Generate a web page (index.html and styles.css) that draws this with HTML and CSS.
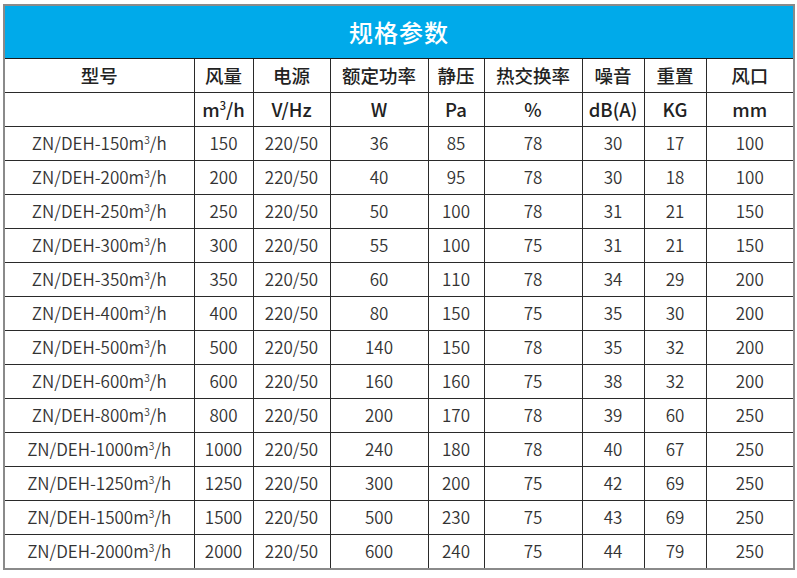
FILE: index.html
```html
<!DOCTYPE html>
<html lang="zh">
<head>
<meta charset="utf-8">
<title>规格参数</title>
<link rel="stylesheet" href="styles.css">
</head>
<body>
<div class="wrap">
<table class="spec">
<colgroup>
<col class="c1"><col class="c2"><col class="c3"><col class="c4"><col class="c5"><col class="c6"><col class="c7"><col class="c8"><col class="c9">
</colgroup>
<thead>
<tr class="title-row"><th colspan="9" class="title">规格参数</th></tr>
<tr class="head"><th>型号</th><th>风量</th><th>电源</th><th>额定功率</th><th>静压</th><th>热交换率</th><th>噪音</th><th>重置</th><th>风口</th></tr>
<tr class="head"><th></th><th>m<sup>3</sup>/h</th><th>V/Hz</th><th>W</th><th>Pa</th><th>%</th><th>dB(A)</th><th>KG</th><th>mm</th></tr>
</thead>
<tbody>
<tr><td>ZN/DEH-150m<sup>3</sup>/h</td><td>150</td><td>220/50</td><td>36</td><td>85</td><td>78</td><td>30</td><td>17</td><td>100</td></tr>
<tr><td>ZN/DEH-200m<sup>3</sup>/h</td><td>200</td><td>220/50</td><td>40</td><td>95</td><td>78</td><td>30</td><td>18</td><td>100</td></tr>
<tr><td>ZN/DEH-250m<sup>3</sup>/h</td><td>250</td><td>220/50</td><td>50</td><td>100</td><td>78</td><td>31</td><td>21</td><td>150</td></tr>
<tr><td>ZN/DEH-300m<sup>3</sup>/h</td><td>300</td><td>220/50</td><td>55</td><td>100</td><td>75</td><td>31</td><td>21</td><td>150</td></tr>
<tr><td>ZN/DEH-350m<sup>3</sup>/h</td><td>350</td><td>220/50</td><td>60</td><td>110</td><td>78</td><td>34</td><td>29</td><td>200</td></tr>
<tr><td>ZN/DEH-400m<sup>3</sup>/h</td><td>400</td><td>220/50</td><td>80</td><td>150</td><td>75</td><td>35</td><td>30</td><td>200</td></tr>
<tr><td>ZN/DEH-500m<sup>3</sup>/h</td><td>500</td><td>220/50</td><td>140</td><td>150</td><td>78</td><td>35</td><td>32</td><td>200</td></tr>
<tr><td>ZN/DEH-600m<sup>3</sup>/h</td><td>600</td><td>220/50</td><td>160</td><td>160</td><td>75</td><td>38</td><td>32</td><td>200</td></tr>
<tr><td>ZN/DEH-800m<sup>3</sup>/h</td><td>800</td><td>220/50</td><td>200</td><td>170</td><td>78</td><td>39</td><td>60</td><td>250</td></tr>
<tr><td>ZN/DEH-1000m<sup>3</sup>/h</td><td>1000</td><td>220/50</td><td>240</td><td>180</td><td>78</td><td>40</td><td>67</td><td>250</td></tr>
<tr><td>ZN/DEH-1250m<sup>3</sup>/h</td><td>1250</td><td>220/50</td><td>300</td><td>200</td><td>75</td><td>42</td><td>69</td><td>250</td></tr>
<tr><td>ZN/DEH-1500m<sup>3</sup>/h</td><td>1500</td><td>220/50</td><td>500</td><td>230</td><td>75</td><td>43</td><td>69</td><td>250</td></tr>
<tr><td>ZN/DEH-2000m<sup>3</sup>/h</td><td>2000</td><td>220/50</td><td>600</td><td>240</td><td>75</td><td>44</td><td>79</td><td>250</td></tr>
</tbody>
</table>
</div>
</body>
</html>
```
FILE: styles.css
```css
html, body {
  margin: 0;
  padding: 0;
  background: #ffffff;
}
.wrap {
  padding: 4px 0 0 3px;
}
.spec {
  border-collapse: collapse;
  table-layout: fixed;
  width: 790px;
  border: 2px solid #8a8a8a;
  font-family: "Noto Sans CJK SC", "Noto Sans", sans-serif;
}
.c1 { width: 190px; }
.c2 { width: 59px; }
.c3 { width: 77px; }
.c4 { width: 98px; }
.c5 { width: 56px; }
.c6 { width: 98px; }
.c7 { width: 62px; }
.c8 { width: 62px; }
.c9 { width: 88px; }
.spec th, .spec td {
  border: 1px solid #2a2a2a;
  text-align: center;
  padding: 0;
  white-space: nowrap;
  line-height: 1.2;
}
.title-row .title {
  background: #00aaea;
  color: #ffffff;
  height: 52px;
  font-size: 24px;
  font-weight: 500;
  letter-spacing: 1px;
  border-bottom: 1px solid #1a1a1a;
}
.head th {
  height: 33px;
  font-size: 18.5px;
  font-weight: 500;
  color: #222222;
}
.spec td {
  height: 33px;
  font-size: 17px;
  font-weight: 350;
  color: #333333;
}
sup {
  font-size: 0.6em;
  line-height: 0;
  vertical-align: 0.6em;
}
```
